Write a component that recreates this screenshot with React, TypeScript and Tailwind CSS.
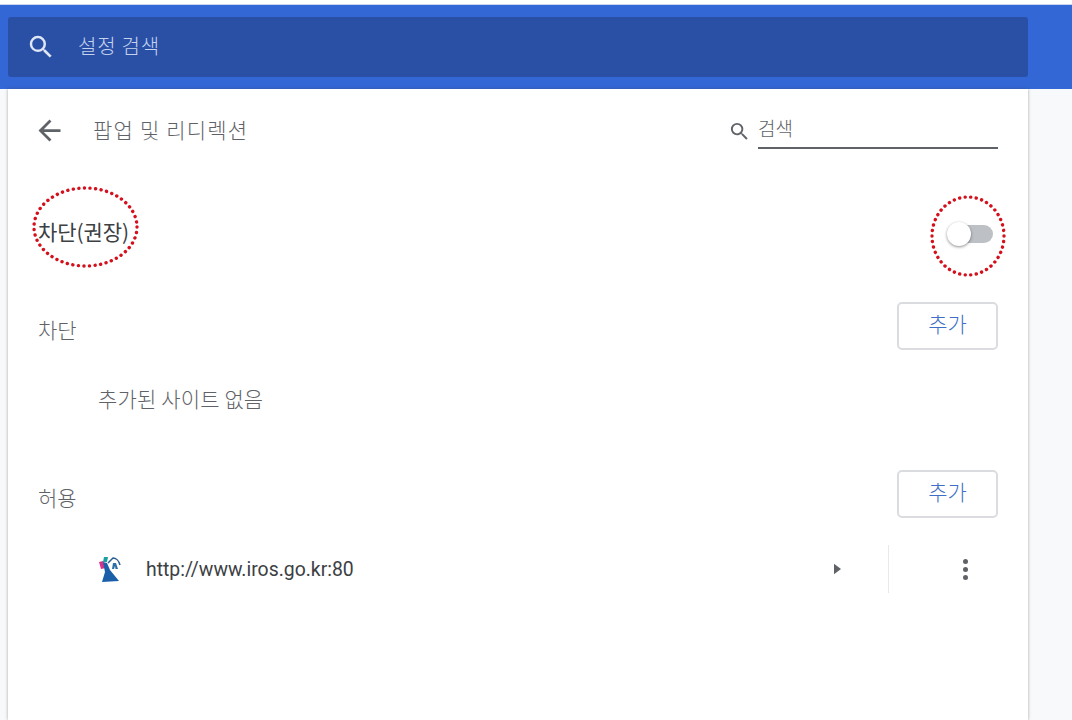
const font = { fontFamily: '"Noto Sans CJK KR", Roboto, sans-serif' }

function SearchIcon({ className }: { className: string }) {
  return (
    <svg viewBox="0 0 24 24" className={className} fill="currentColor">
      <path d="M15.5 14h-.79l-.28-.27A6.471 6.471 0 0 0 16 9.5 6.5 6.5 0 1 0 9.5 16c1.61 0 3.09-.59 4.23-1.57l.27.28v.79l5 4.99L20.49 19l-4.99-5zm-6 0C7.01 14 5 11.99 5 9.5S7.01 5 9.5 5 14 7.01 14 9.5 11.99 14 9.5 14z" />
    </svg>
  )
}

function DottedRing({ className, width, height }: { className: string; width: number; height: number }) {
  return (
    <svg className={className} width={width} height={height} viewBox={`0 0 ${width} ${height}`} fill="none">
      <ellipse
        cx={width / 2}
        cy={height / 2}
        rx={width / 2 - 2}
        ry={height / 2 - 2}
        stroke="#d4101c"
        strokeWidth="3.4"
        strokeLinecap="round"
        strokeDasharray="0.1 5.5"
      />
    </svg>
  )
}

function AddButton() {
  return (
    <button className="w-[101px] h-[48px] rounded-[5px] border-2 border-[#dadce0] bg-white text-[#3f6fc4] text-[21px] font-light pb-1">
      추가
    </button>
  )
}

export default function App() {
  return (
    <div className="h-[720px] w-[1072px] overflow-hidden bg-[#f8f9fa] flex flex-col" style={font}>
      <div className="h-[5px] bg-white border-b border-[#c9d6ee]" />
      {/* Header */}
      <header className="h-[84px] bg-[#3367d6] pl-2 pr-11 pt-3">
        <div className="h-[60px] rounded-[3px] bg-[#2a50a6] flex items-center pl-[18px] text-[#c5d2ee]">
          <SearchIcon className="w-[30px] h-[30px] text-[#dfe6f5]" />
          <span className="ml-[22px] text-[20px] tracking-[0.8px] font-light leading-[28px] pb-[2px]">설정 검색</span>
        </div>
      </header>

      {/* Card */}
      <main className="flex-1 ml-2 w-[1020px] bg-white shadow-[0_0_3px_rgba(60,64,67,0.45)] pl-[30px] pr-[30px] text-[#5f6368]">
        <div className="h-[82px] flex items-center">
          <svg viewBox="0 0 24 24" className="-ml-[5px] w-[33px] h-[33px]" fill="#5f6368">
            <path d="M20 11H7.83l5.59-5.59L12 4l-8 8 8 8 1.41-1.41L7.83 13H20v-2z" />
          </svg>
          <h1 className="ml-[27px] text-[21px] tracking-[1.2px] font-light text-[#5f6368]">팝업 및 리디렉션</h1>
          <div className="ml-auto flex items-end">
            <SearchIcon className="w-[23px] h-[23px] text-[#5f6368] mb-[6px]" />
            <div className="ml-[7px] w-[240px] h-[38px] border-b-2 border-[#5f6368] text-[19px] leading-[34px] font-light">검색</div>
          </div>
        </div>

        <div className="h-[124px] flex items-center relative">
          <span className="text-[21px] text-[#3c4043] pb-[2px] tracking-[-0.1px]">차단(권장)</span>
          <DottedRing className="absolute left-[-6px] top-[15px]" width={107} height={82} />
          <div className="ml-auto mr-[5px] mt-[2px] relative w-[40px] h-[18px] rounded-full bg-[#bdc1c6]">
            <div className="absolute left-[-6px] top-[-3px] w-6 h-6 rounded-full bg-white shadow-[0_1px_3px_rgba(0,0,0,0.45)]" />
          </div>
          <DottedRing className="absolute right-[-8px] top-[24px]" width={76} height={82} />
        </div>

        <div className="flex items-center justify-between h-[48px] mt-[7px]">
          <span className="text-[21px] font-light pt-[8px]">차단</span>
          <AddButton />
        </div>
        <div className="pl-[60px] h-[120px] pt-[26px] text-[21px] font-light leading-[44px] tracking-[0.15px]">추가된 사이트 없음</div>
        <div className="flex items-center justify-between h-[48px]">
          <span className="text-[21px] font-light pt-[8px]">허용</span>
          <AddButton />
        </div>

        <div className="flex items-center h-[48px] mt-[27px] pl-[60px]">
          <svg viewBox="0 0 26 26" className="w-[26px] h-[26px]">
            <path d="M1 6 L5 5 L8 12 L3 13 Z" fill="#d6338c" />
            <path d="M6 1 L10 1 L9 6 L5 6 Z" fill="#1aa0a0" />
            <path d="M5 6 L9 7 L12 14 L21 25 L4 26 L7 16 Z" fill="#1a5fa8" />
            <path d="M10 7 L15 2 C18 2 21 5 22 9" fill="none" stroke="#2b5f94" strokeWidth="1.5" />
            <path d="M14 13 L15 7 L18 7 L20 13 L17.5 13 L17 10 L16 13 Z" fill="#2b6ea8" />
          </svg>
          <span className="ml-[22px] text-[19.4px] text-[#3c4043] pt-[2px]" style={{ fontFamily: 'Roboto, sans-serif' }}>
            http://www.iros.go.kr:80
          </span>
          <svg viewBox="0 0 8 12" className="ml-auto w-[7px] h-[12px]" fill="#5f6368">
            <path d="M0 0 L8 6 L0 12 Z" />
          </svg>
          <div className="ml-[47px] w-px h-[48px] bg-[#e8e9eb]" />
          <div className="ml-[74px] mr-[30px] flex flex-col gap-[3px]">
            <span className="w-[5px] h-[5px] rounded-full bg-[#5f6368]" />
            <span className="w-[5px] h-[5px] rounded-full bg-[#5f6368]" />
            <span className="w-[5px] h-[5px] rounded-full bg-[#5f6368]" />
          </div>
        </div>
      </main>
    </div>
  )
}
